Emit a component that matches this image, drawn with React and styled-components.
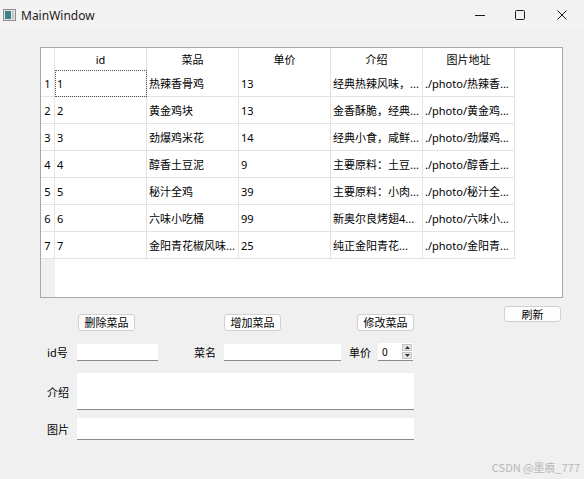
import React from "react";
import styled, { createGlobalStyle } from "styled-components";

const GlobalStyle = createGlobalStyle`
  html, body {
    margin: 0;
    padding: 0;
    background: #f0f0f0;
    overflow: hidden;
  }
  * { box-sizing: border-box; }
`;

const FONT = `"Noto Sans", "Open Sans", "Noto Sans CJK SC", sans-serif`;
const CJK = `"Noto Sans CJK SC", "Noto Sans", sans-serif`;

const columns = ["id", "菜品", "单价", "介绍", "图片地址"];

// texts as the table shows them (elided like the Qt view does)
const dishes = [
  { id: 1, name: "热辣香骨鸡", price: 13, desc: "经典热辣风味，...", img: "./photo/热辣香..." },
  { id: 2, name: "黄金鸡块", price: 13, desc: "金香酥脆，经典...", img: "./photo/黄金鸡..." },
  { id: 3, name: "劲爆鸡米花", price: 14, desc: "经典小食，咸鲜...", img: "./photo/劲爆鸡..." },
  { id: 4, name: "醇香土豆泥", price: 9, desc: "主要原料：土豆...", img: "./photo/醇香土..." },
  { id: 5, name: "秘汁全鸡", price: 39, desc: "主要原料：小肉...", img: "./photo/秘汁全..." },
  { id: 6, name: "六味小吃桶", price: 99, desc: "新奥尔良烤翅4...", img: "./photo/六味小..." },
  { id: 7, name: "金阳青花椒风味...", price: 25, desc: "纯正金阳青花...", img: "./photo/金阳青..." },
];

const Window = styled.div`
  position: relative;
  width: 584px;
  height: 479px;
  display: flex;
  flex-direction: column;
  background: #f0f0f0;
  font-family: ${FONT};
`;

const TitleBar = styled.div`
  height: 30px;
  flex: none;
  display: flex;
  align-items: center;
  background: #f3f3f3;
`;

const AppIcon = styled.svg`
  margin-left: 3px;
  flex: none;
`;

const Title = styled.span`
  margin-left: 5px;
  font-size: 12px;
  color: #1b1b1b;
  flex: 1;
`;

const Control = styled.div`
  width: ${(p) => p.$w}px;
  height: 30px;
  display: flex;
  align-items: center;
  justify-content: center;
`;

const Body = styled.div`
  flex: 1;
  display: flex;
  flex-direction: column;
  padding-top: 17px;
`;

const Frame = styled.div`
  margin-left: 40px;
  width: 523px;
  height: 251px;
  border: 1px solid #a8a8a8;
  background: #fff;
  display: flex;
  overflow: hidden;
`;

const VHeader = styled.div`
  width: 14px;
  flex: none;
  background: #f0f0f0;
  display: flex;
  flex-direction: column;
`;

const VCell = styled.div`
  height: ${(p) => (p.$corner ? 22 : 27)}px;
  background: #fff;
  border-bottom: ${(p) => (p.$corner ? "none" : "1px solid #e3e3e3")};
  border-right: 1px solid #e3e3e3;
  display: flex;
  align-items: center;
  justify-content: center;
  font-size: 11px;
  color: #000;
`;

const Grid = styled.div`
  display: grid;
  grid-template-columns: repeat(5, 92px);
  grid-auto-rows: 27px;
  grid-template-rows: 22px;
  align-content: start;
`;

const HeadCell = styled.div`
  border-right: 1px solid #e3e3e3;
  display: flex;
  align-items: center;
  justify-content: center;
  font-size: 11px;
  color: #000;
`;

const Cell = styled.div`
  border-right: 1px solid #e3e3e3;
  border-bottom: 1px solid #e3e3e3;
  display: flex;
  align-items: center;
  padding: 0 2px;
  font-size: 11px;
  color: #000;
  min-width: 0;
  overflow: hidden;
  outline: ${(p) => (p.$focus ? "1px dotted #555" : "none")};
  outline-offset: -1px;
`;

const CellText = styled.span`
  display: block;
  width: 100%;
  overflow: hidden;
  white-space: nowrap;
  text-overflow: ellipsis;
`;

const ButtonRow = styled.div`
  display: flex;
  align-items: flex-start;
  padding-left: 78px;
  margin-top: 8px;
`;

const Button = styled.button`
  width: 57px;
  height: ${(p) => p.$h || 17}px;
  margin-left: ${(p) => p.$ml || 0}px;
  margin-top: ${(p) => p.$mt || 0}px;
  padding: 0;
  background: #fdfdfd;
  border: 1px solid #d0d0d0;
  border-radius: 3px;
  font-family: ${CJK};
  font-size: 11px;
  line-height: 1;
  color: #000;
`;

const FormRow = styled.div`
  display: flex;
  align-items: center;
  padding-left: 47px;
  margin-top: ${(p) => p.$mt}px;
  height: ${(p) => p.$h}px;
`;

const Label = styled.span`
  width: ${(p) => p.$w || 30}px;
  margin-left: ${(p) => p.$ml || 0}px;
  flex: none;
  font-family: ${CJK};
  font-size: 11px;
  color: #000;
`;

const Input = styled.div`
  width: ${(p) => p.$w}px;
  height: ${(p) => (p.$stretch ? "100%" : "17px")};
  background: #fff;
  border-bottom: 1px solid #8b8b8b;
  flex: none;
`;

const Spin = styled.div`
  width: 35px;
  height: 18px;
  background: #fff;
  border-bottom: 1px solid #8b8b8b;
  display: flex;
  align-items: center;
  padding-left: 4px;
  font-size: 10px;
  color: #000;
`;

const SpinValue = styled.span`
  flex: 1;
`;

const SpinArrows = styled.div`
  width: 10px;
  height: 15px;
  margin-right: 1px;
  display: flex;
  flex-direction: column;
  gap: 1px;
`;

const Arrow = styled.div`
  flex: 1;
  background: #e4e4e4;
  border: 1px solid #c6c6c6;
  display: flex;
  align-items: center;
  justify-content: center;
`;

const Watermark = styled.span`
  position: absolute;
  right: 4px;
  bottom: 4px;
  font-family: ${CJK};
  font-size: 11px;
  color: #b8b8b8;
`;

const Tri = ({ up }) => (
  <svg width="5" height="3" viewBox="0 0 5 3">
    <polygon points={up ? "0,3 5,3 2.5,0" : "0,0 5,0 2.5,3"} fill="#333" />
  </svg>
);

export default function App() {
  return (
    <>
      <GlobalStyle />
      <Window>
        <TitleBar>
          <AppIcon width="13" height="12" viewBox="0 0 13 12">
            <rect x="0.5" y="0.5" width="12" height="11" fill="#e8e8e8" stroke="#8c8c8c" />
            <rect x="2" y="2" width="6" height="8" fill="#3f7f86" />
            <rect x="9" y="2" width="2" height="8" fill="#b9c6cc" />
          </AppIcon>
          <Title>MainWindow</Title>
          <Control $w={40}>
            <svg width="10" height="10" viewBox="0 0 10 10">
              <line x1="0" y1="5.5" x2="10" y2="5.5" stroke="#1b1b1b" strokeWidth="1" />
            </svg>
          </Control>
          <Control $w={40}>
            <svg width="10" height="10" viewBox="0 0 10 10">
              <rect x="0.5" y="0.5" width="9" height="9" rx="1" fill="none" stroke="#1b1b1b" strokeWidth="1" />
            </svg>
          </Control>
          <Control $w={44}>
            <svg width="10" height="10" viewBox="0 0 10 10">
              <path d="M0.5 0.5 L9.5 9.5 M9.5 0.5 L0.5 9.5" stroke="#1b1b1b" strokeWidth="1" />
            </svg>
          </Control>
        </TitleBar>

        <Body>
          <Frame>
            <VHeader>
              <VCell $corner />
              {dishes.map((d) => (
                <VCell key={d.id}>{d.id}</VCell>
              ))}
            </VHeader>
            <Grid>
              {columns.map((c) => (
                <HeadCell key={c}>{c}</HeadCell>
              ))}
              {dishes.map((d) =>
                [d.id, d.name, d.price, d.desc, d.img].map((v, i) => (
                  <Cell key={`${d.id}-${i}`} $focus={d.id === 1 && i === 0}>
                    <CellText>{v}</CellText>
                  </Cell>
                ))
              )}
            </Grid>
          </Frame>

          <ButtonRow>
            <Button $mt={8}>删除菜品</Button>
            <Button $mt={8} $ml={89}>增加菜品</Button>
            <Button $mt={8} $ml={76}>修改菜品</Button>
            <Button $ml={90} $h={16}>刷新</Button>
          </ButtonRow>

          <FormRow $mt={12} $h={18}>
            <Label>id号</Label>
            <Input $w={81} />
            <Label $ml={36}>菜名</Label>
            <Input $w={117} />
            <Label $ml={8} $w={29}>单价</Label>
            <Spin>
              <SpinValue>0</SpinValue>
              <SpinArrows>
                <Arrow><Tri up /></Arrow>
                <Arrow><Tri /></Arrow>
              </SpinArrows>
            </Spin>
          </FormRow>

          <FormRow $mt={12} $h={37}>
            <Label>介绍</Label>
            <Input $w={337} $stretch />
          </FormRow>

          <FormRow $mt={8} $h={22}>
            <Label>图片</Label>
            <Input $w={337} $stretch />
          </FormRow>
        </Body>

        <Watermark>CSDN @墨痕_777</Watermark>
      </Window>
    </>
  );
}
